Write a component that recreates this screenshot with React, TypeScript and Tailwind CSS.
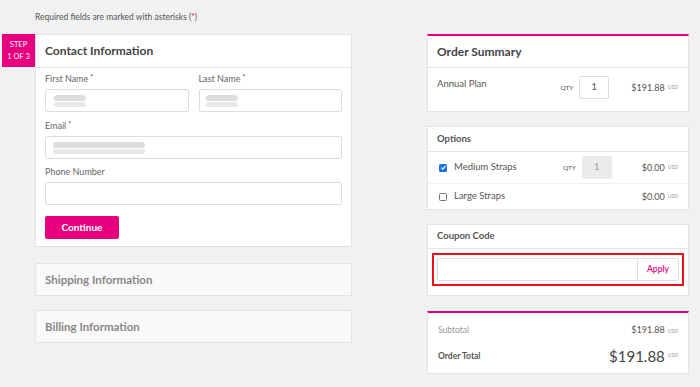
import React from "react";

const font = { fontFamily: "Lato, 'Noto Sans', sans-serif" };

function Label({ text, req }: { text: string; req?: boolean }) {
  return (
    <div className="h-[10px] text-[9px] text-[#666] leading-[10px] mb-[5px]">
      {text}
      {req && <span className="text-[#e6007e] align-top text-[7px] leading-[7px] ml-[2px]">*</span>}
    </div>
  );
}

function Blur({ w }: { w: number }) {
  return (
    <div className="flex flex-col gap-[1px]">
      <div className="h-[6px] bg-[#dcdcdc] rounded-sm" style={{ width: w }} />
      <div className="h-[5px] bg-[#e8e8e8] rounded-sm" style={{ width: w }} />
    </div>
  );
}

function Usd() {
  return <span className="text-[5px] text-[#999] ml-[3px]">USD</span>;
}

export default function App() {
  return (
    <div style={font} className="w-[700px] h-[387px] bg-[#f1f1f1] flex overflow-hidden">
      {/* left */}
      <div className="w-[350px] ml-[2px] flex flex-col">
        <p className="pl-[33px] pt-[11px] h-[34px] text-[8.5px] text-[#555]">
          Required fields are marked with asterisks (<span className="text-[#e6007e]">*</span>)
        </p>
        <div className="flex">
          <div className="w-[33px] h-[33px] bg-[#e6007e] text-white text-[7.5px] leading-[12px] flex flex-col items-center justify-center">
            <span>STEP</span>
            <span>1 OF 3</span>
          </div>
          <div className="flex-1 bg-white border border-[#e3e3e3]">
            <div className="h-[33px] border-b border-[#e3e3e3] flex items-center pl-[9px] text-[12px] font-bold text-[#444]">
              Contact Information
            </div>
            <div className="px-[9px] pt-[6px] pb-[7px]">
              <div className="grid grid-cols-2 gap-x-[10px]">
                <div>
                  <Label text="First Name" req />
                  <div className="h-[23px] border border-[#ddd] rounded-[2px] flex items-center pl-[8px]">
                    <Blur w={32} />
                  </div>
                </div>
                <div>
                  <Label text="Last Name" req />
                  <div className="h-[23px] border border-[#ddd] rounded-[2px] flex items-center pl-[6px]">
                    <Blur w={32} />
                  </div>
                </div>
              </div>
              <div className="mt-[9px]">
                <Label text="Email" req />
                <div className="h-[23px] border border-[#ddd] rounded-[2px] flex items-center pl-[7px]">
                  <Blur w={92} />
                </div>
              </div>
              <div className="mt-[8px]">
                <Label text="Phone Number" />
                <div className="h-[23px] border border-[#ddd] rounded-[2px]" />
              </div>
              <button className="mt-[11px] w-[74px] h-[23px] bg-[#e6007e] rounded-[2px] text-white text-[10px] font-bold">
                Continue
              </button>
            </div>
          </div>
        </div>
        <div className="ml-[33px] mt-[16px] h-[33px] bg-[#f9f9f9] border border-[#e3e3e3] flex items-center pl-[9px] text-[11.5px] font-bold text-[#888]">
          Shipping Information
        </div>
        <div className="ml-[33px] mt-[14px] h-[33px] bg-[#f9f9f9] border border-[#e3e3e3] flex items-center pl-[9px] text-[11.5px] font-bold text-[#888]">
          Billing Information
        </div>
      </div>

      {/* right */}
      <div className="ml-[75px] w-[262px] flex flex-col pt-[34px]">
        <div className="bg-white border border-[#e3e3e3] border-t-[2px] border-t-[#e6007e]">
          <div className="h-[32px] border-b border-[#e3e3e3] flex items-center pl-[9px] text-[12px] font-bold text-[#444]">
            Order Summary
          </div>
          <div className="h-[43px] flex items-start pl-[9px] pr-[10px] pt-[9px]">
            <span className="text-[9.5px] text-[#555]">Annual Plan</span>
            <div className="ml-auto flex items-center mt-[-1px]">
              <span className="text-[6.5px] text-[#555] mr-[6px]">QTY</span>
              <div className="w-[30px] h-[23px] border border-[#ddd] rounded-[2px] flex items-center justify-center text-[9.5px] text-[#555]">
                1
              </div>
              <span className="ml-[22px] text-[9px] text-[#555]">$191.88</span>
              <Usd />
            </div>
          </div>
        </div>

        <div className="mt-[14px] bg-white border border-[#e3e3e3]">
          <div className="h-[25px] border-b border-[#e3e3e3] flex items-center pl-[9px] text-[9.5px] font-bold text-[#555]">
            Options
          </div>
          <div className="h-[32px] flex items-center pl-[11px] pr-[10px] border-b border-[#f1f1f1]">
            <span className="w-[8px] h-[8px] rounded-[1.5px] bg-[#1a73e8] flex items-center justify-center">
              <svg viewBox="0 0 10 10" className="w-[7px] h-[7px]">
                <path d="M2 5.2 L4.2 7.3 L8 2.8" stroke="white" strokeWidth="1.6" fill="none" />
              </svg>
            </span>
            <span className="ml-[7px] text-[9.5px] text-[#555]">Medium Straps</span>
            <div className="ml-auto flex items-center">
              <span className="text-[6.5px] text-[#555] mr-[6px]">QTY</span>
              <div className="w-[30px] h-[23px] bg-[#ebebeb] rounded-[2px] flex items-center justify-center text-[9.5px] text-[#999]">
                1
              </div>
              <span className="ml-[30px] text-[9px] text-[#555]">$0.00</span>
              <Usd />
            </div>
          </div>
          <div className="h-[25px] flex items-center pl-[11px] pr-[10px]">
            <span className="w-[8px] h-[8px] rounded-[1.5px] border border-[#777] bg-white" />
            <span className="ml-[7px] text-[9.5px] text-[#555]">Large Straps</span>
            <div className="ml-auto flex items-center">
              <span className="text-[9px] text-[#555]">$0.00</span>
              <Usd />
            </div>
          </div>
        </div>

        <div className="mt-[14px] bg-white border border-[#e3e3e3]">
          <div className="h-[24px] border-b border-[#e3e3e3] flex items-center pl-[9px] text-[9.5px] font-bold text-[#555]">
            Coupon Code
          </div>
          <div className="px-[4px] pt-[4px] pb-[9px]">
            <div className="border-2 border-[#e8101a] px-[3px] py-[3px]">
              <div className="h-[23px] border border-[#ddd] rounded-[2px] flex">
                <div className="flex-1" />
                <div className="w-[41px] border-l border-[#ddd] flex items-center justify-center text-[8.5px] font-semibold text-[#e6007e]">
                  Apply
                </div>
              </div>
            </div>
          </div>
        </div>

        <div className="mt-[15px] bg-white border border-[#e3e3e3] border-t-[2px] border-t-[#e6007e] h-[63px] px-[10px] flex flex-col">
          <div className="flex items-center justify-between h-[14px] mt-[10px]">
            <span className="text-[8.5px] text-[#999]">Subtotal</span>
            <span className="text-[9px] text-[#555]">
              $191.88
              <Usd />
            </span>
          </div>
          <div className="flex items-center justify-between h-[20px] mt-[9px]">
            <span className="text-[8.5px] font-bold text-[#555]">Order Total</span>
            <span className="text-[15px] text-[#444] flex items-center">
              $191.88
              <Usd />
            </span>
          </div>
        </div>
      </div>
    </div>
  );
}
